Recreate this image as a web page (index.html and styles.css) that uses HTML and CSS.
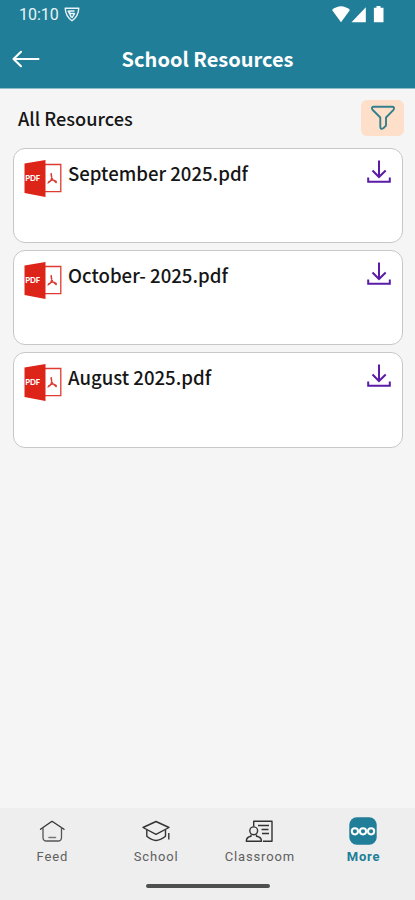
FILE: index.html
```html
<!DOCTYPE html>
<html lang="en">
<head>
<meta charset="utf-8">
<title>School Resources</title>
<link rel="stylesheet" href="styles.css">
</head>
<body>
<div class="screen">
  <header class="header">
    <div class="status">
      <span class="time">10:10</span>
      <svg class="shield" width="16" height="15" viewBox="0 0 16 15" fill="none" stroke="#e9f4f6" stroke-width="1.400" stroke-linejoin="round"><path d="M1.200 1.200H14.800C14.500 6.500 12 11 8 13.800 4 11 1.500 6.500 1.200 1.200Z"/><path d="M10.500 4H5.500V6.500H10.500L8 11M4 3.500 7.500 10.500" stroke-width="1.500"/></svg>
      <svg class="signals" width="52" height="17" viewBox="0 0 52 17" fill="#fff"><path d="M0 4Q9-3.500 18 4L9 16.200Z"/><path d="M33.800 1.300V16.200H19.500Z"/><path d="M44.500 0h4v1.700h3V16.200h-9.600V1.700h2.600Z"/></svg>
    </div>
    <div class="titlebar">
      <svg class="back" width="28" height="18" viewBox="0 0 28 18" fill="none" stroke="#fff" stroke-width="2.100" stroke-linecap="round" stroke-linejoin="round"><path d="M26.500 9H1.500M9 1.800 1.500 9 9 16.200"/></svg>
      <h1>School Resources</h1>
    </div>
  </header>
  <main class="content">
    <div class="toolbar">
      <h2>All Resources</h2>
      <button class="filter" aria-label="Filter"><svg width="26" height="26" viewBox="0 0 26 26" fill="none" stroke="#347f8c" stroke-width="1.900" stroke-linejoin="round"><path d="M3.500 1.800H22.500Q25 2.300 23.500 4.800L16 12.500V20.500L13.300 23.300Q10.800 25 10.300 22V12.500L2.500 4.800Q1 2.300 3.500 1.800Z"/></svg></button>
    </div>
    <div class="list">
      <article class="card">
        <svg class="pdf" viewBox="0 0 38 38"><path class="page" d="M21 4.500H36.800V31.600H21"/><path class="cover" d="M0.500 3.500 21.500 0V37L0.500 33Z"/><path class="curl" d="M24 23c3-1 4.500-5 3.200-9.500M27 14c.2 4 2 6.500 5.200 8.700M24.500 22c2.500-2.200 5-2.500 7.800-.5"/><text x="1.200" y="20.700" class="pdf-label" textLength="15" lengthAdjust="spacingAndGlyphs">PDF</text></svg>
        <span class="name">September 2025.pdf</span>
        <svg class="download" viewBox="0 0 24 24"><path d="M12 .5V17M5.500 10.500 12 17l6.700-6.500M1.200 17.500V21.800H22.800V17.500"/></svg>
      </article>
      <article class="card">
        <svg class="pdf" viewBox="0 0 38 38"><path class="page" d="M21 4.500H36.800V31.600H21"/><path class="cover" d="M0.500 3.500 21.500 0V37L0.500 33Z"/><path class="curl" d="M24 23c3-1 4.500-5 3.200-9.500M27 14c.2 4 2 6.500 5.200 8.700M24.500 22c2.500-2.200 5-2.500 7.800-.5"/><text x="1.200" y="20.700" class="pdf-label" textLength="15" lengthAdjust="spacingAndGlyphs">PDF</text></svg>
        <span class="name">October- 2025.pdf</span>
        <svg class="download" viewBox="0 0 24 24"><path d="M12 .5V17M5.500 10.500 12 17l6.700-6.500M1.200 17.500V21.800H22.800V17.500"/></svg>
      </article>
      <article class="card">
        <svg class="pdf" viewBox="0 0 38 38"><path class="page" d="M21 4.500H36.800V31.600H21"/><path class="cover" d="M0.500 3.500 21.500 0V37L0.500 33Z"/><path class="curl" d="M24 23c3-1 4.500-5 3.200-9.500M27 14c.2 4 2 6.500 5.200 8.700M24.500 22c2.500-2.200 5-2.500 7.800-.5"/><text x="1.200" y="20.700" class="pdf-label" textLength="15" lengthAdjust="spacingAndGlyphs">PDF</text></svg>
        <span class="name">August 2025.pdf</span>
        <svg class="download" viewBox="0 0 24 24"><path d="M12 .5V17M5.500 10.500 12 17l6.700-6.500M1.200 17.500V21.800H22.800V17.500"/></svg>
      </article>
    </div>
  </main>
  <footer class="footer">
    <nav class="tabs">
      <a class="tab"><svg width="28" height="28" viewBox="0 0 28 28" fill="none" stroke="#333" stroke-width="1.300" stroke-linecap="round" stroke-linejoin="round"><path d="M2.500 12.300 14 4.300l12 8"/><path d="M5 11V20.500Q5 24 8.500 24H20Q23.500 24 23.500 20.500V11" stroke="#555"/><path d="M11 20.500H17.500" stroke="#777" stroke-width="1.600"/></svg><span>Feed</span></a>
      <a class="tab"><svg width="28" height="28" viewBox="0 0 28 28" fill="none" stroke="#333" stroke-width="1.400" stroke-linejoin="round"><path d="M1 10.500 14 4.500l13 6L14 17.300Z"/><path d="M4.800 13V19.300Q10 23.500 14 23.500T23.500 19.300V13M26.800 16V22.500"/></svg><span>School</span></a>
      <a class="tab"><svg width="28" height="28" viewBox="0 0 28 28" fill="none" stroke="#333" stroke-width="1.400" stroke-linejoin="round"><path d="M8.700 9.500V4.300H27V24.300H18"/><circle cx="8.700" cy="13.800" r="3.900"/><path d="M6 17.500v1.800Q1.300 20 1.300 24.300H16.500Q16.500 20 11.500 19.300V17.500M13 8.500H24M16.500 12.500H23.500M17 16.500H24"/></svg><span>Classroom</span></a>
      <a class="tab active"><svg width="28" height="28" viewBox="0 0 28 28"><rect x=".3" y=".2" width="27.400" height="27.600" rx="7.500" fill="#217e98"/><g fill="none" stroke="#fff" stroke-width="2"><circle cx="5.900" cy="14.300" r="3.100"/><circle cx="14" cy="14.300" r="3.100"/><circle cx="22.100" cy="14.300" r="3.100"/></g></svg><span>More</span></a>
    </nav>
    <div class="home"></div>
  </footer>
</div>
</body>
</html>
```
FILE: styles.css
```css
* { box-sizing: border-box; }
body { margin: 0; background: #f5f5f5; font-family: "Noto Sans CJK SC", "Noto Sans", sans-serif; }
svg { display: block; flex: none; }
h1, h2 { margin: 0; font-weight: 500; white-space: nowrap; }
.screen { width: 415px; height: 900px; display: flex; flex-direction: column; overflow: hidden; }
.header { height: 89px; flex: none; background: #217e98; border-bottom: 1px solid #8fbdc8; color: #fff; }
.status { height: 30px; display: flex; align-items: flex-start; padding: 6px 31px 0 19px; }
.time { font: 400 16px/18px Roboto, sans-serif; color: #e9f4f6; width: 41px; }
.shield { margin: 1px 0 0 4px; }
.signals { margin-left: auto; }
.titlebar { height: 58px; display: grid; grid-template-columns: 40px 1fr 40px; align-items: center; padding: 0 12px; }
.titlebar h1 { font-size: 20px; line-height: 30px; text-align: center; font-weight: 700; margin-top: -1px; }
.content { flex: 1; padding: 11px 12px 0 13px; }
.toolbar { height: 36px; display: flex; justify-content: space-between; align-items: center; padding-left: 5px; margin-right: -1px; }
.toolbar h2 { font-size: 18.200px; line-height: 28px; color: #161616; }
.filter { width: 43px; height: 36px; padding: 0 0 1px; border: 0; border-radius: 6px; background: #fee0ca; display: flex; align-items: center; justify-content: center; }
.list { display: flex; flex-direction: column; gap: 7px; margin-top: 12px; }
.card { height: 95.200px; border: 1px solid #c7c7c7; border-radius: 12px; background: #fff; display: flex; align-items: flex-start; padding: 11px 11px 0 10px; }
.pdf { width: 38px; height: 38px; }
.page { fill: #fff; stroke: #df3b32; stroke-width: 1.300; }
.cover { fill: #dc2419; }
.curl { fill: none; stroke: #d93a32; stroke-width: 1.300; stroke-linecap: round; }
.pdf-label { font: 900 7.500px Lato, sans-serif; fill: #fff; }
.name { font-size: 18.600px; line-height: 28px; font-weight: 500; color: #161616; white-space: nowrap; margin: -1px 0 0 6px; }
.download { width: 24px; height: 24px; margin-left: auto; fill: none; stroke: #5a1ba6; stroke-width: 2; }
.footer { height: 92px; flex: none; background: #eee; display: flex; flex-direction: column; align-items: center; }
.tabs { width: 100%; height: 76px; display: grid; grid-template-columns: repeat(4, 1fr); }
.tab { display: flex; flex-direction: column; align-items: center; padding-top: 9px; color: #606060; font: 400 13px/16px Roboto, sans-serif; letter-spacing: .85px; }
.tab span { margin: 4px -.85px 0 0; }
.active { color: #217e98; font-weight: 700; }
.home { width: 124px; height: 4px; border-radius: 2px; background: #4d4f4e; }
```
